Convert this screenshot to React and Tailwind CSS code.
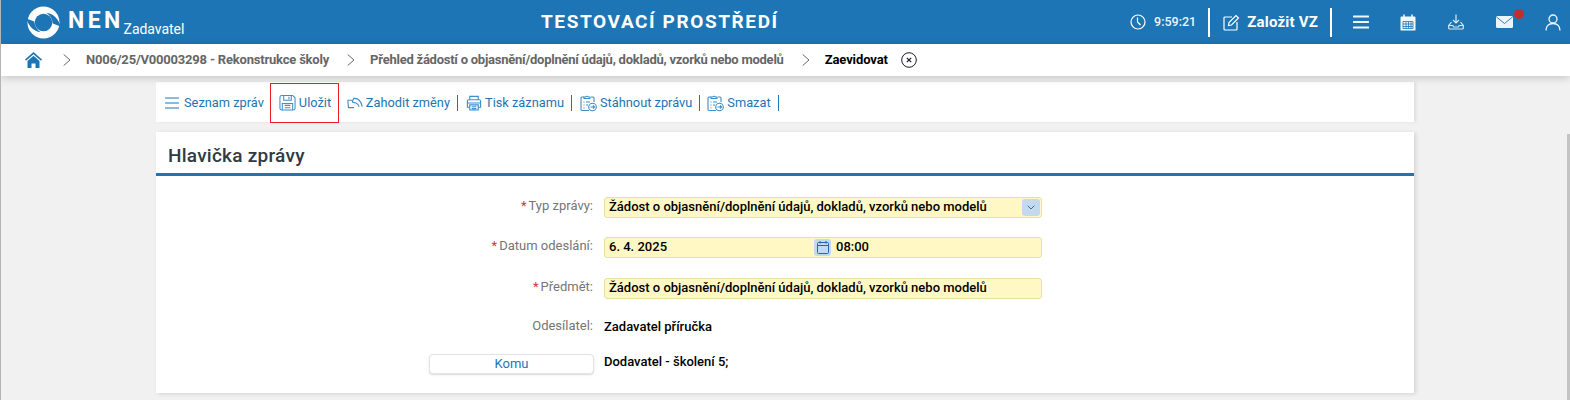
import React from "react";

const Logo = () => (
  <svg width="33" height="33" viewBox="0 0 34 34" fill="none">
    <circle cx="17" cy="17" r="16.500" fill="#fff" />
    <circle cx="17" cy="17" r="9" fill="#1d75b5" />
    <path d="M34.500 21C32.500 13 27 8 20 7 24 10 26 13 26.500 18Z" fill="#1d75b5" />
    <path d="M-.5 13C1.500 21 7 26 14 27 10 24 8 21 7.500 16Z" fill="#1d75b5" />
  </svg>
);

const Sep = ({ tight }) => (
  <span className={tight ? "w-[1px] h-[16px] bg-[#1d75b5] ml-[7px] mr-[7px]" : "w-[1px] h-[16px] bg-[#1d75b5] ml-[7px] mr-[8px]"} />
);

const B = "#3f8ec7";
const SaveIco = () => (
  <svg width="17" height="18" viewBox="0 0 18 18" fill="none" stroke={B} strokeWidth="1.1">
    <path d="M3 1h11.500l2.500 2.500v11a2 2 0 0 1-2 2H3a2 2 0 0 1-2-2V3a2 2 0 0 1 2-2z" />
    <path d="M5 1v5h8V1M10.500 2.500v2.500M3.500 16.500v-7h11v7M6 11.500h6M6 14h6" />
  </svg>
);
const UndoIco = () => (
  <svg width="16" height="13" viewBox="0 0 17 14" fill="none" stroke={B} strokeWidth="1.2">
    <path d="M.7 3.500h5.500M.7 3.500l.8 8h6" />
    <path d="M5.500 5.500 7 1.500C11.500 1 15 4 16.300 10.500M5.500 5.500 9.500 6.500C11 7 12.500 9 13 10.500" />
  </svg>
);
const PrintIco = () => (
  <svg width="16" height="16" viewBox="0 0 17 17" fill="none" stroke={B} strokeWidth="1.2">
    <path d="M4 5V1.500h9V5M4 13H1.500V6.500a1.500 1.500 0 0 1 1.500-1.500h11a1.500 1.500 0 0 1 1.500 1.500V13H13" />
    <path d="M1.500 8.500h14M4 10.500h9v5.500H4zM6 12.500h5M6 14.500h5" />
  </svg>
);
const ClipIco = () => (
  <svg width="17" height="18" viewBox="0 0 17 18" fill="none" stroke={B} strokeWidth="1.1">
    <path d="M9 16.500H2a1 1 0 0 1-1-1V4a1 1 0 0 1 1-1h2M11 3h2a1 1 0 0 1 1 1v4" />
    <path d="M4 4.500V3h1.500a2 2 0 0 1 3 0H10v1.500zM3.500 8h1M3.500 11h1M3.500 14h1M6 8h4M6 11h2" />
    <circle cx="12.500" cy="13" r="3.800" />
    <path d="M10.500 13h4M13 11.500l1.500 1.500L13 14.500" />
  </svg>
);

const ToolItem = ({ icon, label }) => (
  <span className="flex items-center gap-[3px]">
    {icon}
    <span>{label}</span>
  </span>
);

const Chevron = () => (
  <svg width="8" height="14" viewBox="0 0 8 14" fill="none" stroke="#5a6b7a" strokeWidth="1">
    <path d="M.7 1.500 7 7 .7 12.500" />
  </svg>
);

const Label = ({ req, children }) => (
  <div className="w-[448px] shrink-0 text-right text-[13px] text-[#757575] pr-[11px] leading-[16px] mb-[2px]">
    {req && <span className="text-[#c8393b] mr-[2px]">*</span>}
    {children}:
  </div>
);

const fieldCls =
  "h-[21px] bg-[#fff8c5] border border-[#e6dfa6] rounded-[3px] text-[13px] font-medium text-black flex items-center pl-[4px] pb-[1px] leading-none";

export default function App() {
  return (
    <div
      className="relative h-[400px] w-[1570px] overflow-hidden bg-[#f1f1f1] border-l border-[#b5b5b5]"
      style={{ fontFamily: "Roboto, sans-serif" }}
    >
      <header className="relative h-[44px] bg-[#1d75b5] text-white flex items-center">
        <div className="flex items-center pl-[26px] w-[500px]">
          <Logo />
          <span className="ml-[8px] text-[23px] font-bold tracking-[3.4px] leading-none mb-[4px]">NEN</span>
          <span className="text-[14px] self-end ml-[0px] mb-[2px] leading-[16px] tracking-[-0.05px]">Zadavatel</span>
        </div>
        <div className="absolute left-[540px] top-[10px] text-[19px] font-bold tracking-[1.6px] leading-[24px]">
          TESTOVACÍ PROSTŘEDÍ
        </div>
        <div className="ml-auto flex items-center h-full">
          <svg className="mr-[8px]" width="16" height="16" viewBox="0 0 16 16" fill="none" stroke="#fff" strokeWidth="1.200">
            <circle cx="8" cy="8" r="7" />
            <path d="M7.500 3.500V8l3 3" />
          </svg>
          <span className="text-[12.5px] font-medium text-[#eef5fa]">9:59:21</span>
          <span className="w-[2px] h-[29px] bg-white ml-[12px]" />
          <svg className="ml-[13px]" width="17" height="17" viewBox="0 0 17 17" fill="none" stroke="#fff" strokeWidth="1.200">
            <path d="M9 3H2a1 1 0 0 0-1 1v11a1 1 0 0 0 1 1h11a1 1 0 0 0 1-1V8" />
            <path d="M5.500 11.500 6 8.500 13 1.500 15.500 4 8.500 11z" />
          </svg>
          <span className="ml-[7px] text-[15px] font-bold tracking-[0.2px]">Založit VZ</span>
          <span className="w-[2px] h-[29px] bg-white ml-[12px]" />
          <div className="flex items-center w-[37px] justify-end">
            <svg width="16" height="14" viewBox="0 0 16 14" fill="#f2f7fb">
              <rect y="0.500" width="16" height="2" rx="0.500" />
              <rect y="6" width="16" height="2" rx="0.500" />
              <rect y="11.500" width="16" height="2" rx="0.500" />
            </svg>
          </div>
          <div className="flex items-center ml-[31px]">
            <svg width="16" height="17" viewBox="0 0 16 17">
              <path d="M1.500 2.500h13a1 1 0 0 1 1 1V16a.5.5 0 0 1-.5.500H1a.5.500 0 0 1-.5-.5V3.500a1 1 0 0 1 1-1z" fill="#f2f7fb" />
              <path d="M4 0.500v3.500M12 0.500v3.500" stroke="#f2f7fb" strokeWidth="1.500" />
              <path d="M3 7.500h10v7H3zM3 10h10M3 12.500h10M6 7.500v7M8.500 7.500v7M11 7.500v7" stroke="#1d75b5" strokeWidth="0.800" fill="none" />
            </svg>
          </div>
          <div className="flex items-center ml-[32px]">
            <svg width="16" height="16" viewBox="0 0 16 16" fill="none" stroke="#dbe9f3" strokeWidth="1.200">
              <path d="M8 0.500v8M5 6l3 3 3-3" />
              <path d="M3.500 8 .7 11.500v2.500a1 1 0 0 0 1 1h12.600a1 1 0 0 0 1-1v-2.500L12.500 8M.7 11.500h4l1 1.500h4.600l1-1.500h4" />
            </svg>
          </div>
          <div className="relative flex items-center ml-[32px]">
            <svg width="17" height="12" viewBox="0 0 17 12">
              <rect width="17" height="12" rx="1.500" fill="#eef5fa" />
              <path d="M0.500 1 8.500 7.500 16.500 1" stroke="#1d75b5" strokeWidth="0.900" fill="none" />
            </svg>
            <span className="absolute left-[18px] top-[-7px] w-[10px] h-[10px] rounded-full bg-[#c62b30]" />
          </div>
          <div className="flex items-center ml-[32px] mr-[9px]">
            <svg width="16" height="17" viewBox="0 0 16 17" fill="none" stroke="#f2f7fb" strokeWidth="1.300">
              <circle cx="8" cy="5" r="4" />
              <path d="M1 16.500c0-4.500 3-7 7-7s7 2.500 7 7" />
            </svg>
          </div>
        </div>
      </header>

      <nav className="relative h-[32px] bg-white flex items-center shadow-[0_2px_8px_rgba(0,0,0,0.18)] text-[13px] font-bold text-[#666666] pl-[24px]">
        <svg width="17" height="16" viewBox="0 0 17 16" fill="#1d75b5">
          <path d="M8.500 0 0 7.500l1 1.200L8.500 2.200 16 8.700l1-1.200z" />
          <path d="M2.500 9 8.500 3.800 14.500 9v7h-4v-4.500h-4V16h-4z" />
        </svg>
        <span className="ml-[21px]"><Chevron /></span>
        <span className="ml-[15px] tracking-[-0.2px]">N006/25/V00003298 - Rekonstrukce školy</span>
        <span className="ml-[18px]"><Chevron /></span>
        <span className="ml-[15px] tracking-[-0.24px]">Přehled žádostí o objasnění/doplnění údajů, dokladů, vzorků nebo modelů</span>
        <span className="ml-[18px]"><Chevron /></span>
        <span className="ml-[15px] text-black tracking-[-0.1px]">Zaevidovat</span>
        <svg className="ml-[13px]" width="16" height="16" viewBox="0 0 16 16" fill="none" stroke="#1a1a2a">
          <circle cx="8" cy="8" r="7.300" strokeWidth="1" />
          <path d="M5.800 5.800l4.400 4.400M10.200 5.800l-4.400 4.400" strokeWidth="1.200" />
        </svg>
      </nav>

      <main className="w-[1258px] ml-[155px]">
        <div className="mt-[6px] h-[40px] bg-white shadow-[2px_0_3px_rgba(0,0,0,0.08)] flex items-center pl-[9px] pt-[2px] text-[12.8px] text-[#1d75b5]">
          <span className="flex items-center gap-[5px]">
            <svg width="14" height="12" viewBox="0 0 14 12" stroke="#1d75b5" strokeWidth="1.100"><path d="M0 1h14M0 6h14M0 11h14" /></svg>
            Seznam zpráv
          </span>
          <div className="ml-[6px] w-[69px] h-[40px] border border-[#ee1c25] flex items-center pl-[8px] shrink-0">
            <ToolItem icon={<SaveIco />} label="Uložit" />
          </div>
          <span className="ml-[8px]"><ToolItem icon={<UndoIco />} label="Zahodit změny" /></span>
          <Sep />
          <ToolItem icon={<PrintIco />} label="Tisk záznamu" />
          <Sep />
          <ToolItem icon={<ClipIco />} label="Stáhnout zprávu" />
          <Sep tight />
          <ToolItem icon={<ClipIco />} label="Smazat" />
          <Sep />
        </div>

        <section className="mt-[10px] h-[261px] bg-white shadow-[2px_1px_4px_rgba(0,0,0,0.12)]">
          <div className="h-[44px] border-b-[3px] border-[#1d75b5] flex items-center pl-[12px] pt-[7px] text-[19px] font-medium tracking-[0.25px] text-[#2e3a46]">
            Hlavička zprávy
          </div>
          <div className="pt-[20px]">
            <div className="flex items-center h-[22px]">
              <Label req>Typ zprávy</Label>
              <div className={fieldCls + " w-[438px] relative"}>
                Žádost o objasnění/doplnění údajů, dokladů, vzorků nebo modelů
                <span className="absolute right-[1px] top-[1px] w-[18px] h-[17px] rounded-[3px] bg-[#c5d9ee] flex items-center justify-center">
                  <svg width="8" height="5" viewBox="0 0 8 5" fill="none" stroke="#3a6ea5"><path d="M.7.7 4 4 7.300.7" /></svg>
                </span>
              </div>
            </div>
            <div className="flex items-center h-[22px] mt-[18px]">
              <Label req>Datum odeslání</Label>
              <div className={fieldCls + " w-[438px] relative"}>
                6. 4. 2025
                <span className="absolute left-[209px] top-[1px] w-[17px] h-[17px] rounded-[3px] bg-[#c5d9ee] flex items-center justify-center">
                  <svg width="12" height="13" viewBox="0 0 12 13" fill="none" stroke="#2f62a8"><rect x=".5" y="1.500" width="11" height="11" rx="1" /><path d="M.5 4.500h11M3 0v2.500M9 0v2.500" /></svg>
                </span>
                <span className="absolute left-[231px]">08:00</span>
              </div>
            </div>
            <div className="flex items-center h-[22px] mt-[19px]">
              <Label req>Předmět</Label>
              <div className={fieldCls + " w-[438px]"}>Žádost o objasnění/doplnění údajů, dokladů, vzorků nebo modelů</div>
            </div>
            <div className="flex items-center h-[22px] mt-[17px]">
              <Label>Odesílatel</Label>
              <div className="text-[13px] font-medium text-black">Zadavatel příručka</div>
            </div>
            <div className="flex h-[22px] mt-[16px]">
              <div className="w-[448px] shrink-0 pl-[273px] pr-[10px]">
                <div className="h-[20px] rounded-[4px] border border-[#e4e4e4] bg-white shadow-[0_1px_2px_rgba(0,0,0,0.15)] text-[13px] text-[#1d75b5] flex items-center justify-center">Komu</div>
              </div>
              <div className="text-[13px] font-medium text-black leading-[16px]">Dodavatel - školení 5;</div>
            </div>
          </div>
        </section>
      </main>
      <div className="absolute right-[0px] top-[134px] bottom-0 w-[3px] bg-[#c4c4c4]" />
    </div>
  );
}
